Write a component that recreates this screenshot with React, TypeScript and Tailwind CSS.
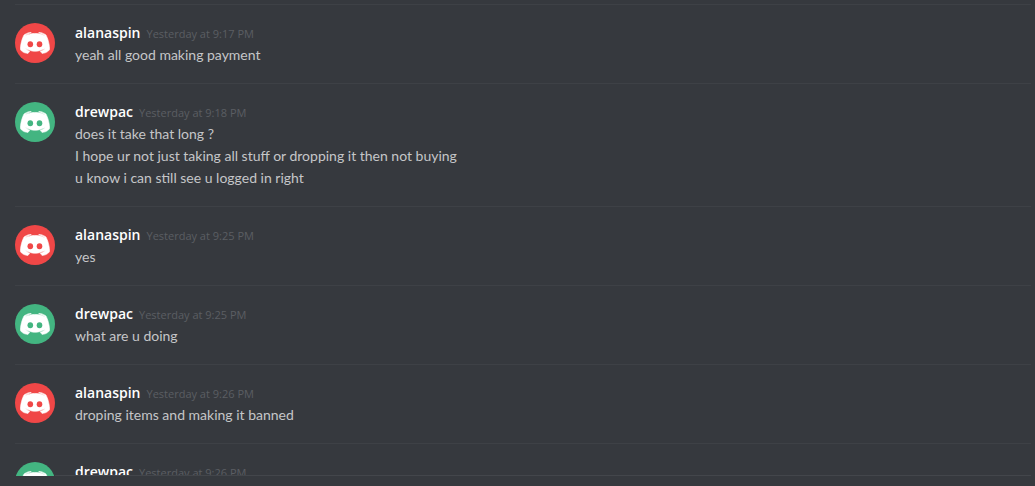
import React from 'react';
import clsx from 'clsx';

interface MessageGroup {
  id: number;
  author: string;
  time: string;
  lines: string[];
}

const groups: MessageGroup[] = [
  { id: 1, author: 'alanaspin', time: 'Yesterday at 9:17 PM', lines: ['yeah all good making payment'] },
  {
    id: 2,
    author: 'drewpac',
    time: 'Yesterday at 9:18 PM',
    lines: [
      'does it take that long ?',
      'I hope ur not just taking all stuff or dropping it then not buying',
      'u know i can still see u logged in right',
    ],
  },
  { id: 3, author: 'alanaspin', time: 'Yesterday at 9:25 PM', lines: ['yes'] },
  { id: 4, author: 'drewpac', time: 'Yesterday at 9:25 PM', lines: ['what are u doing'] },
  { id: 5, author: 'alanaspin', time: 'Yesterday at 9:26 PM', lines: ['droping items and making it banned'] },
  { id: 6, author: 'drewpac', time: 'Yesterday at 9:26 PM', lines: [] },
];

const avatarColors: Record<string, string> = {
  alanaspin: 'bg-[#f04747] text-[#f04747]',
  drewpac: 'bg-[#43b581] text-[#43b581]',
};

const Avatar = ({ author }: { author: string }) => (
  <div className={clsx('mt-px flex size-10 shrink-0 items-center justify-center rounded-full', avatarColors[author])}>
    <svg viewBox="-2 18 150 109" className="w-[30px]" aria-hidden="true">
      <path
        fill="white"
        stroke="white"
        strokeWidth="3"
        d="M107.75 125.001s-4.5-5.375-8.25-10.125c16.375-4.625 22.625-14.875 22.625-14.875-5.125 3.375-10 5.75-14.375 7.375-6.25 2.625-12.25 4.375-18.125 5.375-12 2.25-23 1.625-32.375-.125-7.125-1.375-13.25-3.375-18.375-5.375-2.875-1.125-6-2.5-9.125-4.25-.375-.25-.75-.375-1.125-.625-.25-.125-.375-.25-.5-.375-2.25-1.25-3.5-2.125-3.5-2.125s6 10 21.875 14.75c-3.75 4.75-8.375 10.375-8.375 10.375-27.625-.875-38.125-19-38.125-19 0-40.25 18-72.875 18-72.875 18-13.5 35.125-13.125 35.125-13.125l1.25 1.5c-22.5 6.5-32.875 16.375-32.875 16.375s2.75-1.5 7.375-3.625c13.375-5.875 24-7.5 28.375-7.875.75-.125 1.375-.25 2.125-.25 7.625-1 16.25-1.25 25.25-.25 11.875 1.375 24.625 4.875 37.625 12 0 0-9.875-9.375-31.125-15.875l1.75-2S110 19.626 128 33.126c0 0 18 32.625 18 72.875 0 0-10.625 18.125-38.25 19z"
      />
      <ellipse cx="49.5" cy="79" rx="14" ry="15" fill="currentColor" />
      <ellipse cx="95.5" cy="79" rx="14" ry="15" fill="currentColor" />
    </svg>
  </div>
);

const Message = ({ group }: { group: MessageGroup }) => (
  <li className="flex gap-5 border-t border-[#3e4146] py-[17px]">
    <Avatar author={group.author} />
    <div className="min-w-0 flex-1 text-[14px] leading-[22px]">
      <h2 className="flex items-baseline gap-[6px] font-['Open_Sans',sans-serif]">
        <span className="font-semibold text-white">{group.author}</span>
        <time className="text-[11px] leading-none text-[#5b5e63]">{group.time}</time>
      </h2>
      {group.lines.map((line) => (
        <p key={line} className="text-[#c5c6c8]">{line}</p>
      ))}
    </div>
  </li>
);

const App = () => {
  return (
    <main className="flex h-screen flex-col bg-[#36393e] font-['Lato','Open_Sans',sans-serif]">
      <ul className="min-h-0 flex-1 overflow-hidden pt-1 pr-1 pl-[15px]">
        {groups.map((group) => (
          <Message key={group.id} group={group} />
        ))}
      </ul>
      {/* divider starts to the right of the avatar column */}
      <footer className="-mt-px pr-1 pb-[10px] pl-[55px]">
        <div className="border-t border-[#43464b]" />
      </footer>
    </main>
  );
};

export default App;
